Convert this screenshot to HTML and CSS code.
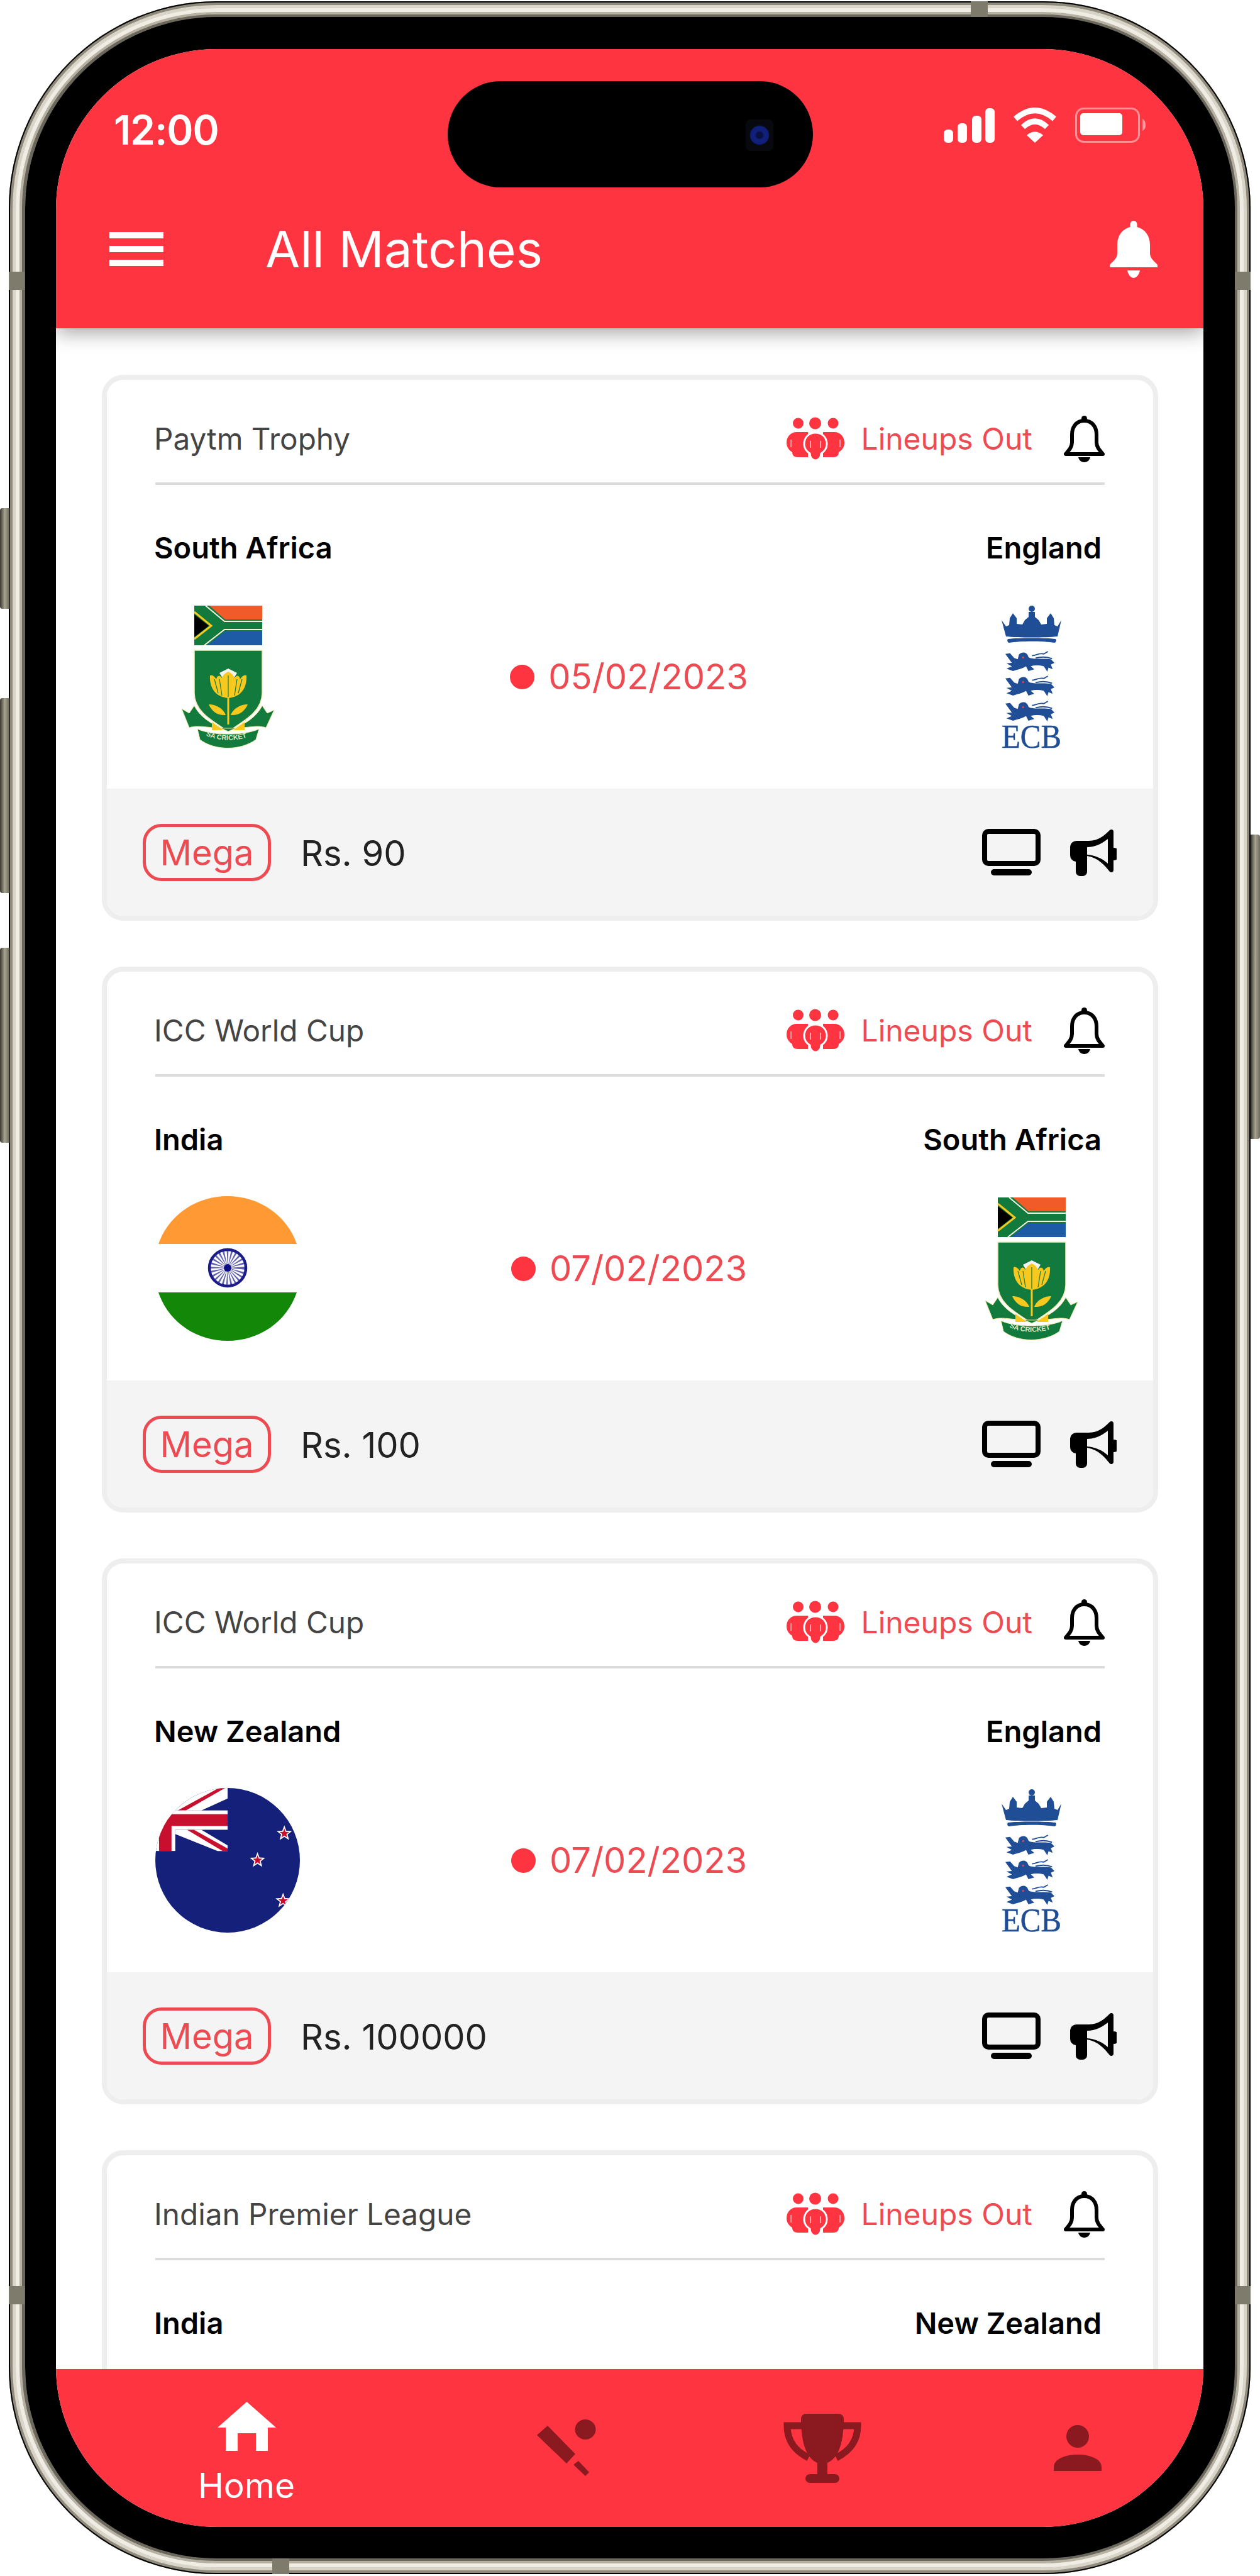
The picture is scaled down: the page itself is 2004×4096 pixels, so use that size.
FILE: index.html
```html
<!DOCTYPE html>
<html lang="en">
<head>
<meta charset="utf-8">
<title>All Matches</title>
<link rel="stylesheet" href="styles.css">
</head>
<body>
<svg class="defs" hidden>
  <symbol id="i-people" viewBox="0 0 92 69">
    <circle cx="18.500" cy="10" r="8.500"/><circle cx="45.500" cy="10" r="9.500"/><circle cx="74" cy="10" r="8.500"/>
    <path d="M16 24C6 24 0 32 0 41C0 48 4 53 9 56C9 61 12 64 18 64H34V24z"/>
    <path d="M76 24C86 24 92 32 92 41C92 48 88 53 83 56C83 61 80 64 74 64H58V24z"/>
    <path d="M46 25C57 25 64 33 64 43C64 50 60 55 55 58C55 64 51 69 46 69C41 69 37 64 37 58C32 55 28 50 28 43C28 33 35 25 46 25z" stroke="#fff" stroke-width="3"/>
    <path d="M7 36v12M85 36v12M38 38v11M54 38v11" stroke="#fff" stroke-opacity=".55" stroke-width="2"/>
  </symbol>
  <symbol id="i-bell" viewBox="0 0 65 74">
    <circle cx="32.500" cy="4.500" r="4.500"/>
    <path d="M32.500 8C19 8 13 19 13 30v12c0 8-5 13-10 19h59c-5-6-10-11-10-19V30C52 19 46 8 32.500 8z" fill="none" stroke="#000" stroke-width="6" stroke-linejoin="round"/>
    <path d="M23 66h19c-1 5-5 8-9.500 8s-8.500-3-9.500-8z"/>
  </symbol>
  <symbol id="i-tv" viewBox="0 0 93 74">
    <rect x="4" y="4" width="85" height="51" rx="6" fill="none" stroke="#000" stroke-width="8"/>
    <rect x="14" y="64" width="65" height="10" rx="5"/>
  </symbol>
  <symbol id="i-horn" viewBox="0 0 74 75">
    <path fill-rule="evenodd" d="M10 19H30C45 19 55 10 63 2a3.500 3.500 0 0 1 6 2V30a10 10 0 0 1 0 20V66a3.500 3.500 0 0 1-6 2C55 58 45 46 27 43V68a7 7 0 0 1-7 7H16a7 7 0 0 1-7-7V52A10 10 0 0 1 0 42V28A10 10 0 0 1 10 19zM27 29V41C40 42 51 47 60 55V16C51 23 40 29 27 29z"/>
  </symbol>
  <symbol id="i-sa" viewBox="0 0 150 228">
    <rect x="22" y="1" width="108" height="63" fill="#137a3d"/>
    <path d="M46 1H130V23H71z" fill="#f15a29"/>
    <path d="M43 64L71 42H130V64z" fill="#1d5ba6"/>
    <path d="M40 1L70 26H130M38 64L70 39H130" fill="none" stroke="#f4f1e0" stroke-width="2"/>
    <path d="M22 11L49 33L22 54" fill="none" stroke="#f7c81e" stroke-width="3"/>
    <path d="M22 15L45 33L22 51z" fill="#000"/>
    <path d="M22 72H130V140C130 170 100 185 76 201C52 185 22 170 22 140z" fill="#137a3d" stroke="#f3eeb8" stroke-width="1.500"/>
    <path d="M2 165L14 172L22 160C30 176 45 188 76 201C107 188 122 176 130 160L138 172L149 167L136 195C120 190 110 196 76 196C42 196 30 190 14 195z" fill="#137a3d" stroke="#e9e59a" stroke-width="1"/>
    <path d="M27 197C50 208 102 208 125 197L120 214C95 232 55 232 31 214z" fill="#137a3d" stroke="#f0eeb0" stroke-width="1"/>
    <path d="M50 186L68 199H50zM102 186L84 199H102z" fill="#f7c81e"/>
    <path d="M62 108L76 101L90 108L84 118H68z" fill="#f3f3f0"/>
    <path d="M47 112C50 110 55 114 57 118C58 112 62 110 66 116C70 108 73 108 76 106C79 108 82 108 86 116C90 110 94 112 95 118C97 114 102 110 105 112C106 130 98 146 76 148C54 146 46 130 47 112z" fill="#f7c81e"/>
    <path d="M62 118L66 144M76 112V146M90 118L86 144M54 118L60 140M98 118L92 140" stroke="#137a3d" stroke-width="1.200" fill="none"/>
    <path d="M45 158C56 158 68 164 72 175C60 176 50 170 45 158zM107 158C96 158 84 164 80 175C92 176 102 170 107 158z" fill="#f7c81e"/>
    <path d="M76 148V190" stroke="#f7c81e" stroke-width="3"/>
    <path id="sa-arc" d="M37 205C55 218 97 218 118 205" fill="none"/>
    <text class="sa-text"><textPath href="#sa-arc" startOffset="4">SA CRICKET</textPath></text>
  </symbol>
  <symbol id="i-lion" viewBox="0 0 85 36">
    <path d="M24 6C30 0 38 2 40 10C44 15 60 12 78 14L84 20L78 23L81 31L74 28L72 35L66 26C58 24 50 24 44 26L50 31L40 34L36 26C30 30 20 32 14 34L3 30L12 26L3 21L12 20L6 12L1 5L9 4L16 12L22 14z"/>
    <path d="M46 8C54 8 56 3 66 5L73 1M52 12C60 10 70 9 80 13" fill="none" stroke="#1f4e96" stroke-width="2"/>
    <circle cx="31" cy="11" r="1.800" fill="#d9425a"/>
  </symbol>
  <symbol id="i-ecb" viewBox="0 0 95 228">
    <g fill="#1f4e96">
      <circle cx="48" cy="6" r="5"/>
      <path d="M0 24L7 34L12 32L13 21L18 13L24 21L24 30L33 31L37 24L43 19V11H53V19L59 24L63 31L72 30L72 21L78 13L83 21L84 32L89 34L95 24L89 50C70 52 26 52 7 50z"/>
      <path d="M10 54C28 52 68 52 86 54C88 57 86 60 84 60C66 57 30 57 12 60C10 60 8 57 10 54z"/>
      <use href="#i-lion" x="5" y="72" width="80" height="36"/>
      <use href="#i-lion" x="5" y="111" width="80" height="36"/>
      <use href="#i-lion" x="5" y="151" width="80" height="36"/>
      <text class="ecb-text" x="0" y="227" textLength="95" lengthAdjust="spacingAndGlyphs">ECB</text>
    </g>
  </symbol>
</svg>

<main class="device">
  <span class="btn btn-silent"></span><span class="btn btn-up"></span><span class="btn btn-down"></span><span class="btn btn-power"></span>
  <span class="band band-lt"></span><span class="band band-lb"></span><span class="band band-rt"></span><span class="band band-rb"></span><span class="band band-top"></span><span class="band band-bot"></span>
  <div class="bezel">
    <div class="screen">
      <span class="island"><i class="camera"></i></span>
      <header class="top">
        <div class="statusbar">
          <span class="time">12:00</span>
          <div class="status-icons">
            <svg class="sig" viewBox="0 0 81 55" fill="#fff"><rect x="0" y="34" width="15" height="21" rx="6"/><rect x="22" y="24" width="15" height="31" rx="6"/><rect x="45" y="12" width="15" height="43" rx="6"/><rect x="66" y="0" width="15" height="55" rx="6"/></svg>
            <svg class="wifi" viewBox="0 0 72 56"><path d="M5 18Q36-9 67 18M17 31Q36 13 55 31" fill="none" stroke="#fff" stroke-width="9"/><path d="M23 44Q36 33 49 44L36 56z" fill="#fff"/></svg>
            <svg class="batt" viewBox="0 0 112 56"><rect x="1.500" y="1.500" width="100" height="53" rx="12" fill="none" stroke="#fff" stroke-opacity=".45" stroke-width="3"/><rect x="8" y="9" width="67" height="35" rx="5" fill="#fff"/><path d="M107 18C111 20 112 24 112 28S111 35 107 37z" fill="#fff" fill-opacity=".5"/></svg>
          </div>
        </div>
        <div class="appbar">
          <div class="burger"><i></i><i></i><i></i></div>
          <h1 class="title">All Matches</h1>
          <svg class="topbell" viewBox="0 0 76 91" fill="#fff"><path d="M38 0c3.500 0 5.500 3 5.500 6v4C56 13 64 24 64 38v14c0 7 6 12 11 17q2 2 1 5H0q-1-3 1-5C6 64 12 59 12 52V38C12 24 20 13 32.500 10V6C32.500 3 34.500 0 38 0zM28 79h20c-1 7-6 12-10 12s-9-5-10-12z"/></svg>
        </div>
      </header>

      <section class="list">
        <article class="card">
          <div class="card-top"><span class="league">Paytm Trophy</span><span class="lineups"><svg class="people"><use href="#i-people"/></svg>Lineups Out</span><svg class="bell"><use href="#i-bell"/></svg></div>
          <div class="teams"><span>South Africa</span><span>England</span></div>
          <div class="match">
            <div class="logo"><svg class="crest"><use href="#i-sa"/></svg></div>
            <div class="date"><i class="dot"></i>05/02/2023</div>
            <div class="logo"><svg class="ecb"><use href="#i-ecb"/></svg></div>
          </div>
          <div class="card-foot"><span class="pill">Mega</span><span class="price">Rs. 90</span><svg class="tv"><use href="#i-tv"/></svg><svg class="horn"><use href="#i-horn"/></svg></div>
        </article>

        <article class="card">
          <div class="card-top"><span class="league">ICC World Cup</span><span class="lineups"><svg class="people"><use href="#i-people"/></svg>Lineups Out</span><svg class="bell"><use href="#i-bell"/></svg></div>
          <div class="teams"><span>India</span><span>South Africa</span></div>
          <div class="match">
            <div class="logo">
              <svg class="flag" viewBox="0 0 220 230">
                <path d="M0 76C16 30 60 0 110 0S204 30 220 76z" fill="#ff9933"/>
                <path d="M0 153C16 200 60 230 110 230S204 200 220 153z" fill="#138808"/>
                <circle cx="110" cy="114" r="14" fill="none" stroke="#2a2a9a" stroke-opacity=".75" stroke-width="26" stroke-dasharray="1.500 2.100"/>
                <circle cx="110" cy="114" r="29" fill="none" stroke="#1b1b8a" stroke-width="4.500"/>
                <circle cx="110" cy="114" r="6" fill="#0d0d85"/>
              </svg>
            </div>
            <div class="date"><i class="dot"></i>07/02/2023</div>
            <div class="logo"><svg class="crest"><use href="#i-sa"/></svg></div>
          </div>
          <div class="card-foot"><span class="pill">Mega</span><span class="price">Rs. 100</span><svg class="tv"><use href="#i-tv"/></svg><svg class="horn"><use href="#i-horn"/></svg></div>
        </article>

        <article class="card">
          <div class="card-top"><span class="league">ICC World Cup</span><span class="lineups"><svg class="people"><use href="#i-people"/></svg>Lineups Out</span><svg class="bell"><use href="#i-bell"/></svg></div>
          <div class="teams"><span>New Zealand</span><span>England</span></div>
          <div class="match">
            <div class="logo">
              <svg class="flag-nz" viewBox="0 0 232 232">
                <clipPath id="nz-clip"><circle cx="116" cy="116" r="116"/></clipPath>
                <g clip-path="url(#nz-clip)">
                  <rect width="232" height="232" fill="#14207a"/>
                  <path d="M0 0H116V17L74 36H0z" fill="#fff"/>
                  <path d="M102 0H112L49 36H36z" fill="#c8102e"/>
                  <rect x="0" y="36" width="116" height="31" fill="#fff"/>
                  <rect x="0" y="36" width="32" height="65" fill="#fff"/>
                  <path d="M32 67H74L116 92V101H100L32 74z" fill="#fff"/>
                  <path d="M51 67H62L116 97V101H108z" fill="#c8102e"/>
                  <rect x="0" y="42" width="116" height="19" fill="#c8102e"/>
                  <rect x="6" y="42" width="20" height="59" fill="#c8102e"/>
                  <g transform="translate(207 73) scale(13)"><polygon class="star-w" points="0,-1 .247,-.34 .951,-.309 .4,.13 .588,.809 0,.42 -.588,.809 -.4,.13 -.951,-.309 -.247,-.34"/></g>
                  <g transform="translate(207 73) scale(8)"><polygon class="star-r" points="0,-1 .247,-.34 .951,-.309 .4,.13 .588,.809 0,.42 -.588,.809 -.4,.13 -.951,-.309 -.247,-.34"/></g>
                  <g transform="translate(164 116) scale(13)"><polygon class="star-w" points="0,-1 .247,-.34 .951,-.309 .4,.13 .588,.809 0,.42 -.588,.809 -.4,.13 -.951,-.309 -.247,-.34"/></g>
                  <g transform="translate(164 116) scale(8)"><polygon class="star-r" points="0,-1 .247,-.34 .951,-.309 .4,.13 .588,.809 0,.42 -.588,.809 -.4,.13 -.951,-.309 -.247,-.34"/></g>
                  <g transform="translate(205 181) scale(13)"><polygon class="star-w" points="0,-1 .247,-.34 .951,-.309 .4,.13 .588,.809 0,.42 -.588,.809 -.4,.13 -.951,-.309 -.247,-.34"/></g>
                  <g transform="translate(205 181) scale(8)"><polygon class="star-r" points="0,-1 .247,-.34 .951,-.309 .4,.13 .588,.809 0,.42 -.588,.809 -.4,.13 -.951,-.309 -.247,-.34"/></g>
                </g>
              </svg>
            </div>
            <div class="date"><i class="dot"></i>07/02/2023</div>
            <div class="logo"><svg class="ecb"><use href="#i-ecb"/></svg></div>
          </div>
          <div class="card-foot"><span class="pill">Mega</span><span class="price">Rs. 100000</span><svg class="tv"><use href="#i-tv"/></svg><svg class="horn"><use href="#i-horn"/></svg></div>
        </article>

        <article class="card card-cut">
          <div class="card-top"><span class="league">Indian Premier League</span><span class="lineups"><svg class="people"><use href="#i-people"/></svg>Lineups Out</span><svg class="bell"><use href="#i-bell"/></svg></div>
          <div class="teams"><span>India</span><span>New Zealand</span></div>
        </article>
      </section>

      <nav class="tabs">
        <div class="tab tab-home">
          <svg class="home" viewBox="0 0 93 78" fill="#fff"><path fill-rule="evenodd" d="M46.500 0L93 41H80V78H13V41H0zM32 50V78H61V50z"/></svg>
          <span class="tab-label">Home</span>
        </div>
        <div class="tab tab-bat">
          <svg class="nav-bat" viewBox="0 0 94 91" fill="#8b1a20"><ellipse cx="77" cy="16" rx="16.500" ry="16"/><path d="M17 10L0 25L47 70L61 55zM66 66L58 72L77 90L83 84z"/></svg>
        </div>
        <div class="tab tab-cup">
          <svg class="nav-cup" viewBox="0 0 124 110" fill="#8b1a20"><path d="M30 19H6C6 45 20 60 40 70M94 19H118C118 45 104 60 84 70" fill="none" stroke="#8b1a20" stroke-width="11"/><path d="M36 0H88a8 8 0 0 1 8 8C96 40 90 70 70 78V96H82a7 7 0 0 1 0 14H42a7 7 0 0 1 0-14H54V78C34 70 28 40 28 8a8 8 0 0 1 8-8z"/></svg>
        </div>
        <div class="tab tab-user">
          <svg class="nav-user" viewBox="0 0 76 73" fill="#8b1a20"><ellipse cx="38" cy="18" rx="18" ry="18"/><path d="M0 73V67C0 54 18 47 38 47S76 54 76 67V73z"/></svg>
        </div>
      </nav>
    </div>
  </div>
</main>
</body>
</html>
```

FILE: styles.css
```css
* { box-sizing: border-box; }
html, body { margin: 0; padding: 0; background: #fff; }
body { width: 2004px; height: 4096px; overflow: hidden; padding: 2px 15px 3px 14px; font-family: Inter, "Liberation Sans", sans-serif; }
.defs { display: none; }

.device {
  position: relative;
  height: 4091px;
  padding: 25px 25px 25px 26px;
  border-radius: 330px;
  background: #d4d0c3;
  box-shadow: inset 0 0 0 2px #000, inset 0 0 0 6px #8f8a7c, inset 0 0 0 11px #d8d4c8, inset 0 0 0 17px #efece3, inset 0 0 0 21px #b6b1a3, inset 0 0 0 26px #6b675c;
}
.bezel { height: 100%; padding: 51px 50px 50px 49px; background: #000; border-radius: 305px; position: relative; }
.screen {
  position: relative;
  display: flex;
  flex-direction: column;
  height: 100%;
  overflow: hidden;
  background: #fff;
  border-radius: 255px;
}

.btn { position: absolute; width: 15px; background: linear-gradient(90deg, #3a382f, #a7a291 50%, #6d695c); border-radius: 4px 0 0 4px; }
.btn-silent { left: -14px; top: 806px; height: 160px; }
.btn-up { left: -14px; top: 1108px; height: 310px; }
.btn-down { left: -14px; top: 1505px; height: 310px; }
.btn-power { right: -15px; top: 1325px; height: 484px; border-radius: 0 4px 4px 0; }

.band { position: absolute; background: #7f7b6c; z-index: 1; }
.band-lt, .band-lb, .band-rt, .band-rb { width: 25px; height: 29px; }
.band-lt { left: 0; top: 430px; }
.band-lb { left: 0; top: 3633px; }
.band-rt { right: 0; top: 430px; }
.band-rb { right: 0; top: 3633px; }
.band-top, .band-bot { width: 27px; height: 25px; }
.band-top { left: 1530px; top: 0; }
.band-bot { left: 419px; bottom: 0; }

.island { position: absolute; left: 623px; top: 51px; width: 581px; height: 169px; border-radius: 85px; background: #000; z-index: 3; }
.camera { position: absolute; left: 474px; top: 61px; width: 44px; height: 50px; border-radius: 8px; background: radial-gradient(circle, #0a1040 0 5px, #10207a 7px 14px, #08080f 16px); }

.top { background: #fe3540; height: 444px; flex: none; position: relative; z-index: 2; box-shadow: 0 6px 30px rgba(0, 0, 0, .38); }
.statusbar { display: flex; justify-content: space-between; align-items: center; height: 256px; padding: 0 92px; }
.time { color: #fff; font-size: 64px; font-weight: 600; letter-spacing: -1px; }
.status-icons { display: flex; align-items: center; gap: 28px; margin-top: -14px; }
.sig { width: 81px; height: 55px; }
.wifi { width: 72px; height: 56px; }
.batt { width: 112px; height: 56px; }
.appbar { display: flex; align-items: center; height: 110px; margin-top: 7px; padding: 0 73px 0 85px; }
.burger { display: flex; flex-direction: column; gap: 12px; width: 86px; }
.burger i { display: block; height: 10px; background: #fff; }
.title { flex: 1; margin: 0 0 0 162px; color: #fff; font-size: 80px; font-weight: 400; line-height: 1; }
.topbell { width: 76px; height: 91px; }

.list { flex: 1; min-height: 0; overflow: hidden; display: flex; flex-direction: column; gap: 73px; padding: 74px 72px 0 73px; }
.card { flex: none; border: 8px solid #eee; border-radius: 34px; overflow: hidden; background: #fff; }
.card-cut { min-height: 868px; }
.card-top { display: flex; align-items: center; height: 167px; margin: 0 77px; padding-top: 24px; border-bottom: 4px solid #dcdcdc; }
.league { flex: 1; margin-left: -2px; color: #444; font-size: 47.700px; }
.lineups { display: flex; align-items: center; color: #ee4a52; font-size: 48px; }
.people { width: 92px; height: 69px; margin-right: 26px; fill: #fe3540; }
.bell { width: 65px; height: 74px; margin-left: 50px; }

.teams { display: flex; justify-content: space-between; margin: 70px 82px 0 75px; font-size: 47px; font-weight: 600; line-height: 60px; color: #000; }
.match { display: flex; justify-content: space-between; align-items: center; height: 228px; margin: 61px 79px 64px 77px; }
.logo { display: flex; justify-content: center; width: 230px; }
.crest { width: 150px; height: 228px; }
.ecb { width: 95px; height: 228px; }
.flag { width: 220px; height: 230px; }
.flag-nz { width: 232px; height: 232px; }
.sa-text { font-family: "Liberation Sans", sans-serif; font-size: 11px; font-weight: 700; fill: #dfe8c8; }
.ecb-text { font-family: "Liberation Serif", serif; font-size: 52px; stroke: #1f4e96; stroke-width: .5px; }
.star-w { fill: #fff; }
.star-r { fill: #c8102e; }
.date { display: flex; align-items: center; margin-left: -1px; color: #ee4a52; font-size: 56px; }
.dot { width: 39px; height: 39px; margin-right: 22px; border-radius: 50%; background: #fe3540; }

.card-foot { display: flex; align-items: center; height: 202px; padding: 0 58px 0 57px; background: #f4f4f4; }
.pill { display: flex; justify-content: center; align-items: center; width: 204px; height: 91px; padding-top: 2px; border: 5px solid #ee4a52; border-radius: 30px; color: #ee4a52; font-size: 56px; }
.price { flex: 1; margin-left: 47px; padding-top: 3px; color: #222; font-size: 56px; }
.tv { width: 93px; height: 74px; }
.horn { width: 74px; height: 75px; margin-left: 47px; }

.tabs { flex: none; display: flex; height: 251px; padding-left: 226px; background: #fe3540; position: relative; z-index: 2; }
.tab { display: flex; flex-direction: column; align-items: center; justify-content: center; }
.tab-home { justify-content: flex-start; padding-top: 52px; }
.tab-bat { margin-left: 385px; }
.tab-cup { margin-left: 298px; }
.tab-user { margin-left: 306px; }
.tab-label { margin-top: 22px; color: #fff; font-size: 55px; line-height: 1.2; }
.home { width: 93px; height: 78px; }
.nav-bat { width: 94px; height: 91px; }
.nav-cup { width: 124px; height: 110px; }
.nav-user { width: 76px; height: 73px; }
```
